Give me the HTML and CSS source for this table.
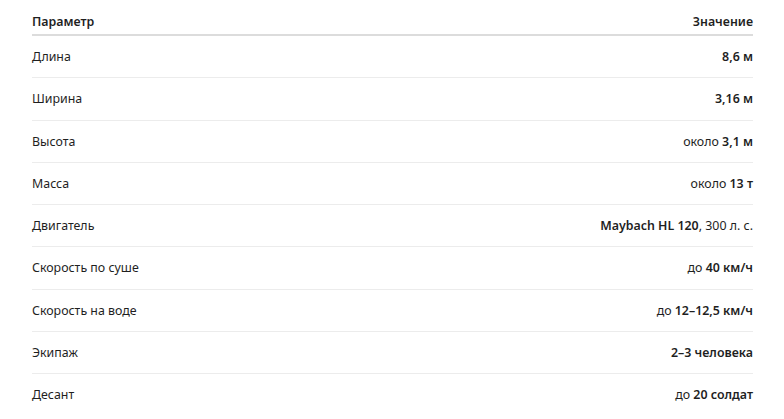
FILE: index.html
```html
<!DOCTYPE html>
<html lang="ru">
<head>
    <meta charset="UTF-8">
    <meta name="viewport" content="width=device-width, initial-scale=1.0">
    <title>Характеристики</title>
    <link rel="stylesheet" href="styles.css">
</head>
<body>
    <div class="specs">
        <table class="specs-table">
            <thead>
                <tr>
                    <th>Параметр</th>
                    <th class="value">Значение</th>
                </tr>
            </thead>
            <tbody>
                <tr>
                    <td>Длина</td>
                    <td class="value"><b>8,6 м</b></td>
                </tr>
                <tr>
                    <td>Ширина</td>
                    <td class="value"><b>3,16 м</b></td>
                </tr>
                <tr>
                    <td>Высота</td>
                    <td class="value">около <b>3,1 м</b></td>
                </tr>
                <tr>
                    <td>Масса</td>
                    <td class="value">около <b>13 т</b></td>
                </tr>
                <tr>
                    <td>Двигатель</td>
                    <td class="value"><b>Maybach HL 120</b>, 300 л. с.</td>
                </tr>
                <tr>
                    <td>Скорость по суше</td>
                    <td class="value">до <b>40 км/ч</b></td>
                </tr>
                <tr>
                    <td>Скорость на воде</td>
                    <td class="value">до <b>12–12,5 км/ч</b></td>
                </tr>
                <tr>
                    <td>Экипаж</td>
                    <td class="value"><b>2–3 человека</b></td>
                </tr>
                <tr>
                    <td>Десант</td>
                    <td class="value">до <b>20 солдат</b></td>
                </tr>
            </tbody>
        </table>
    </div>
</body>
</html>
```

FILE: styles.css
```css
* {
    margin: 0;
    padding: 0;
    box-sizing: border-box;
}

body {
    background: #fff;
    color: #1f1f1f;
    font-family: 'Noto Sans', 'Open Sans', sans-serif;
    font-size: 12.4px;
}

.specs {
    padding: 0 31px 0 32px;
}

.specs-table {
    width: 100%;
    border-collapse: collapse;
}

.specs-table th {
    text-align: left;
    font-weight: 600;
    line-height: 17px;
    padding: 13px 0 4px;
    border-bottom: 2px solid #dcdcdc;
}

.specs-table td {
    line-height: 17.25px;
    padding: 12px 0;
    border-bottom: 1px solid #ececec;
}

.specs-table tbody tr:last-child td {
    border-bottom: none;
}

.specs-table .value {
    text-align: right;
}

.specs-table b {
    font-weight: 600;
}
```
